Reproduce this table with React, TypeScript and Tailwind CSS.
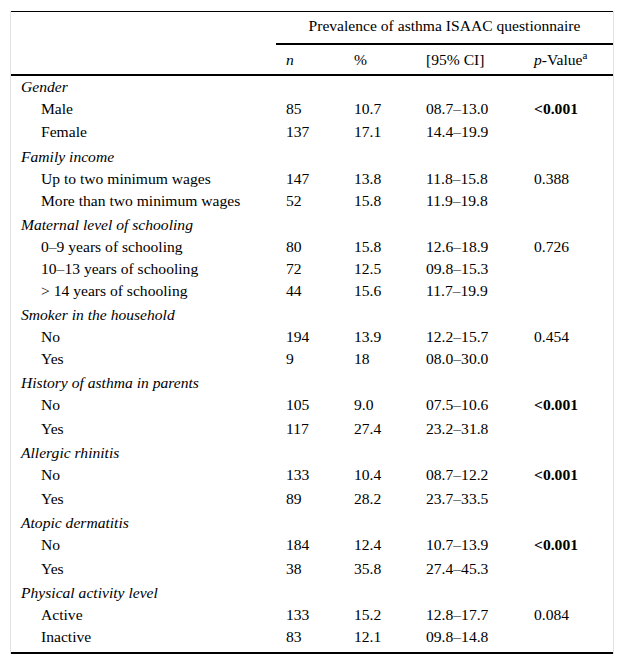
type Row = {
  label: string;
  cat?: boolean;
  n?: string;
  pct?: string;
  ci?: string;
  p?: string;
  bold?: boolean;
  h: number;
};

const rows: Row[] = [
  { label: 'Gender', cat: true, h: 22 },
  { label: 'Male', n: '85', pct: '10.7', ci: '08.7–13.0', p: '<0.001', bold: true, h: 23 },
  { label: 'Female', n: '137', pct: '17.1', ci: '14.4–19.9', h: 25 },
  { label: 'Family income', cat: true, h: 22 },
  { label: 'Up to two minimum wages', n: '147', pct: '13.8', ci: '11.8–15.8', p: '0.388', h: 22 },
  { label: 'More than two minimum wages', n: '52', pct: '15.8', ci: '11.9–19.8', h: 24 },
  { label: 'Maternal level of schooling', cat: true, h: 22 },
  { label: '0–9 years of schooling', n: '80', pct: '15.8', ci: '12.6–18.9', p: '0.726', h: 22 },
  { label: '10–13 years of schooling', n: '72', pct: '12.5', ci: '09.8–15.3', h: 22 },
  { label: '> 14 years of schooling', n: '44', pct: '15.6', ci: '11.7–19.9', h: 24 },
  { label: 'Smoker in the household', cat: true, h: 22 },
  { label: 'No', n: '194', pct: '13.9', ci: '12.2–15.7', p: '0.454', h: 22 },
  { label: 'Yes', n: '9', pct: '18', ci: '08.0–30.0', h: 24 },
  { label: 'History of asthma in parents', cat: true, h: 22 },
  { label: 'No', n: '105', pct: '9.0', ci: '07.5–10.6', p: '<0.001', bold: true, h: 24 },
  { label: 'Yes', n: '117', pct: '27.4', ci: '23.2–31.8', h: 24 },
  { label: 'Allergic rhinitis', cat: true, h: 22 },
  { label: 'No', n: '133', pct: '10.4', ci: '08.7–12.2', p: '<0.001', bold: true, h: 24 },
  { label: 'Yes', n: '89', pct: '28.2', ci: '23.7–33.5', h: 24 },
  { label: 'Atopic dermatitis', cat: true, h: 22 },
  { label: 'No', n: '184', pct: '12.4', ci: '10.7–13.9', p: '<0.001', bold: true, h: 24 },
  { label: 'Yes', n: '38', pct: '35.8', ci: '27.4–45.3', h: 24 },
  { label: 'Physical activity level', cat: true, h: 22 },
  { label: 'Active', n: '133', pct: '15.2', ci: '12.8–17.7', p: '0.084', h: 22 },
  { label: 'Inactive', n: '83', pct: '12.1', ci: '09.8–14.8', h: 27 },
];

export default function App() {
  return (
    <div className="w-[624px] h-[665px] bg-white pt-[11px] pl-[10px]" style={{ fontFamily: '"Liberation Serif", "Times New Roman", serif' }}>
      <div className="w-[604px] border-x border-[#e2e2e2] text-[15.6px] text-black">
        <table className="w-[602px] table-fixed border-collapse border-t border-black">
          <colgroup>
            <col className="w-[265px]" />
            <col className="w-[68px]" />
            <col className="w-[72px]" />
            <col className="w-[108px]" />
            <col className="w-[89px]" />
          </colgroup>
          <thead>
            <tr className="h-[32px]">
              <th />
              <th colSpan={4} className="border-b-2 border-black font-normal text-center align-middle leading-[22px] pb-[2px]">
                Prevalence of asthma ISAAC questionnaire
              </th>
            </tr>
            <tr className="h-[31px] border-b-2 border-black">
              <th />
              <th className="font-normal italic text-left leading-[22px] px-[10px] pt-[1px]">n</th>
              <th className="font-normal text-left leading-[22px] px-[10px] pt-[1px]">%</th>
              <th className="font-normal text-left leading-[22px] px-[10px] pt-[1px]">[95% CI]</th>
              <th className="font-normal text-left leading-[22px] px-[10px] pt-[1px] whitespace-nowrap">
                <i>p</i>-Value<sup className="text-[11px]">a</sup>
              </th>
            </tr>
          </thead>
          <tbody>
            {rows.map((r, i) => (
              <tr key={i} style={{ height: r.h }} className={i === rows.length - 1 ? 'border-b-2 border-black' : ''}>
                {r.cat ? (
                  <td colSpan={5} className="align-top leading-[22px] italic px-[10px] whitespace-nowrap">{r.label}</td>
                ) : (
                  <>
                    <td className="align-top leading-[22px] pl-[30px] whitespace-nowrap">{r.label}</td>
                    <td className="align-top leading-[22px] px-[10px]">{r.n}</td>
                    <td className="align-top leading-[22px] px-[10px]">{r.pct}</td>
                    <td className="align-top leading-[22px] px-[10px] whitespace-nowrap">{r.ci}</td>
                    <td className={`align-top leading-[22px] px-[10px] ${r.bold ? 'font-bold' : ''}`}>{r.p}</td>
                  </>
                )}
              </tr>
            ))}
          </tbody>
        </table>
      </div>
    </div>
  );
}
